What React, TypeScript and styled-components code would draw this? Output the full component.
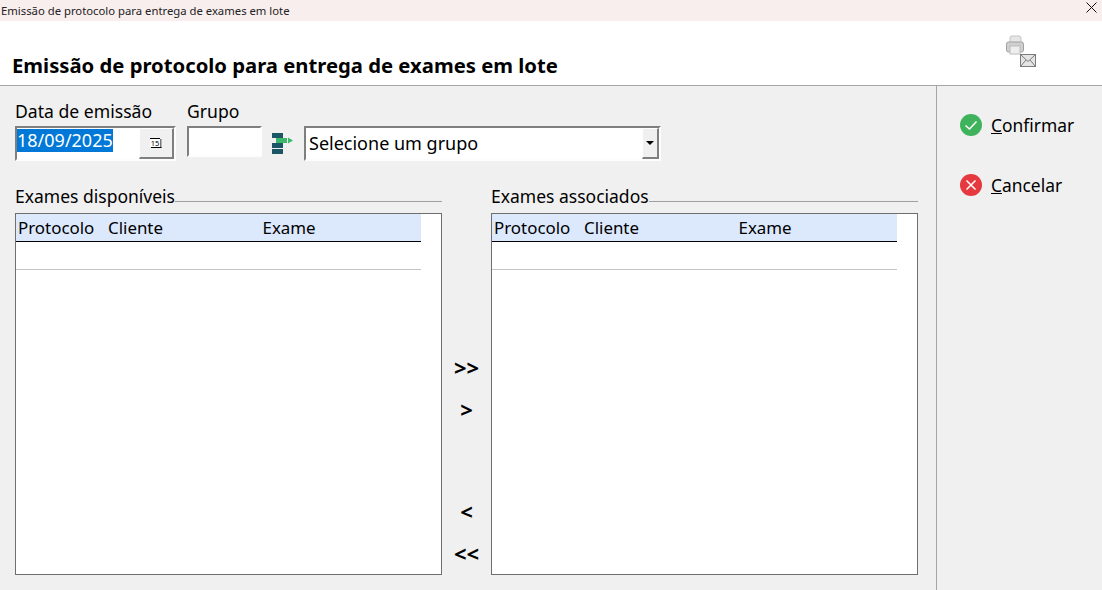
import React from 'react'
import styled, { createGlobalStyle } from 'styled-components'

const GlobalStyle = createGlobalStyle`
  html, body {
    margin: 0;
    padding: 0;
    background: #f0f0f0;
  }
  body {
    font-family: "Noto Sans", "Open Sans", sans-serif;
    color: #000;
    overflow: hidden;
  }
`

const columns = [
  { label: 'Protocolo', width: 90 },
  { label: 'Cliente', width: 154.5 },
  { label: 'Exame', width: 100 },
]

const ExamList = ({ title }: { title: string }) => (
  <Section>
    <SectionTitle>
      <span>{title}</span>
      <TitleRule />
    </SectionTitle>
    <ListBox>
      <ListHeader>
        {columns.map(col => (
          <HeaderCell key={col.label} $width={col.width}>
            {col.label}
          </HeaderCell>
        ))}
      </ListHeader>
      <ListRow />
    </ListBox>
  </Section>
)

const GroupIcon = () => (
  <svg width="24" height="22" viewBox="0 0 24 22">
    <rect x="1" y="0" width="11" height="5" fill="#1c5566" />
    <rect x="1" y="10" width="11" height="5" fill="#1c5566" />
    <rect x="1" y="16" width="11" height="5" fill="#1c5566" />
    <rect x="5" y="5" width="11" height="5" fill="#3cb86c" />
    <path d="M17 4.5 L22 7.5 L17 10.5 Z" fill="#3cb86c" />
  </svg>
)

const PrintMailIcon = () => (
  <svg width="32" height="34" viewBox="0 0 32 34">
    <rect x="4" y="1" width="11" height="8" rx="2" fill="#e6e6e6" stroke="#c4c4c4" />
    <rect x="0.5" y="7" width="17" height="10" rx="2" fill="#cfcfcf" stroke="#a2a2a2" />
    <rect x="4" y="11" width="10" height="8" fill="#eeeeee" stroke="#bcbcbc" />
    <rect x="14.5" y="19.5" width="15" height="12" fill="#e4e4e4" stroke="#7c7c7c" />
    <path d="M14.5 19.5 L22 26.5 L29.5 19.5 M14.5 31.5 L20 25 M29.5 31.5 L24 25" fill="none" stroke="#7c7c7c" />
  </svg>
)

const CalendarIcon = () => (
  <svg width="12" height="10" viewBox="0 0 12 10">
    <rect x="0" y="0" width="10" height="9" fill="#fff" />
    <path d="M0 0.5 H10" stroke="#000" />
    <rect x="10" y="1" width="1.5" height="9" fill="#777" />
    <rect x="1" y="9" width="10.5" height="1" fill="#000" />
    <text x="5" y="8" fontSize="7.5" textAnchor="middle" fill="#000">
      15
    </text>
  </svg>
)

const StatusIcon = ({ ok }: { ok?: boolean }) => (
  <svg width="22" height="22" viewBox="0 0 22 22">
    <circle cx="11" cy="11" r="11" fill={ok ? '#3fb35c' : '#e5393f'} />
    {ok ? (
      <path d="M5.5 11.5 L9.5 15 L16.5 7.5" fill="none" stroke="#fff" strokeWidth="1.5" />
    ) : (
      <path d="M6.5 6.5 L15.5 15.5 M15.5 6.5 L6.5 15.5" fill="none" stroke="#fff" strokeWidth="1.5" />
    )}
  </svg>
)

const App = () => {
  return (
    <Window>
      <GlobalStyle />
      <TitleBar>
        <TitleText>Emissão de protocolo para entrega de exames em lote</TitleText>
        <CloseButton>
          <svg width="11" height="11" viewBox="0 0 11 11">
            <path d="M0.5 0.5 L10.5 10.5 M10.5 0.5 L0.5 10.5" stroke="#111" strokeWidth="1" />
          </svg>
        </CloseButton>
      </TitleBar>
      <Header>
        <Heading>Emissão de protocolo para entrega de exames em lote</Heading>
        <HeaderIcon>
          <PrintMailIcon />
        </HeaderIcon>
      </Header>
      <Body>
        <Main>
          <FilterRow>
            <Field $gap={11}>
              <FieldLabel>Data de emissão</FieldLabel>
              <DateBox>
                <DateValue>18/09/2025</DateValue>
                <CalendarButton>
                  <CalendarIcon />
                </CalendarButton>
              </DateBox>
            </Field>
            <Field $gap={9}>
              <FieldLabel>Grupo</FieldLabel>
              <GroupInput />
            </Field>
            <IconSlot>
              <GroupIcon />
            </IconSlot>
            <SelectBox>
              <SelectText>Selecione um grupo</SelectText>
              <SelectArrow>
                <svg width="8" height="4" viewBox="0 0 8 4">
                  <path d="M0 0 H8 L4 4 Z" fill="#000" />
                </svg>
              </SelectArrow>
            </SelectBox>
          </FilterRow>
          <Lists>
            <ExamList title="Exames disponíveis" />
            <Transfer>
              <MoveGroup>
                <MoveButton>&gt;&gt;</MoveButton>
                <MoveButton>&gt;</MoveButton>
              </MoveGroup>
              <MoveGroup>
                <MoveButton>&lt;</MoveButton>
                <MoveButton>&lt;&lt;</MoveButton>
              </MoveGroup>
            </Transfer>
            <ExamList title="Exames associados" />
          </Lists>
        </Main>
        <Side>
          <ActionButton>
            <StatusIcon ok />
            <ActionLabel>
              <u>C</u>onfirmar
            </ActionLabel>
          </ActionButton>
          <ActionButton>
            <StatusIcon />
            <ActionLabel>
              <u>C</u>ancelar
            </ActionLabel>
          </ActionButton>
        </Side>
      </Body>
    </Window>
  )
}

const Window = styled.div`
  width: 1102px;
  height: 590px;
  display: flex;
  flex-direction: column;
  background: #f0f0f0;
`

const TitleBar = styled.div`
  height: 21px;
  flex: none;
  display: flex;
  align-items: center;
  justify-content: space-between;
  background: #f9eeee;
`

const TitleText = styled.span`
  padding-left: 1px;
  font-size: 11.3px;
  color: #222;
  white-space: nowrap;
`

const CloseButton = styled.div`
  display: flex;
  padding: 0 5px 7px 0;
`

const Header = styled.div`
  height: 65px;
  flex: none;
  box-sizing: border-box;
  display: flex;
  justify-content: space-between;
  background: #fff;
  border-bottom: 1px solid #a6a6a6;
`

const Heading = styled.h1`
  margin: 0;
  padding: 31px 0 0 12px;
  font-size: 20.25px;
  line-height: 27px;
  font-weight: 700;
  white-space: nowrap;
`

const HeaderIcon = styled.div`
  padding: 14px 64px 0 0;
`

const Body = styled.div`
  flex: 1;
  display: flex;
  min-height: 0;
`

const Main = styled.div`
  width: 936px;
  flex: none;
  box-sizing: border-box;
  padding: 14px 18px 15px 15px;
  display: flex;
  flex-direction: column;
`

const FilterRow = styled.div`
  display: flex;
  align-items: flex-start;
  height: 62px;
  flex: none;
`

const Field = styled.div<{ $gap: number }>`
  display: flex;
  flex-direction: column;
  margin-right: ${props => props.$gap}px;
`

const FieldLabel = styled.label`
  font-size: 17.6px;
  line-height: 22px;
  height: 26px;
  white-space: nowrap;
`

const sunken = `
  box-sizing: border-box;
  border-style: solid;
  border-width: 2px;
  border-color: #7f7f7f #fdfdfd #fdfdfd #7f7f7f;
`

const DateBox = styled.div`
  ${sunken}
  width: 161px;
  height: 35px;
  display: flex;
  background: #fff;
`

const DateValue = styled.span`
  align-self: flex-start;
  margin: 1px auto 0 0;
  background: #0078d7;
  color: #fff;
  font-size: 18px;
  line-height: 23px;
  height: 23px;
  width: 96px;
  white-space: nowrap;
`

const CalendarButton = styled.div`
  width: 35px;
  box-sizing: border-box;
  display: flex;
  align-items: center;
  justify-content: center;
  background: #f0f0f0;
  border-style: solid;
  border-width: 1px 2px 2px 1px;
  border-color: #fff #7f7f7f #7f7f7f #fff;
`

const GroupInput = styled.div`
  ${sunken}
  width: 75px;
  height: 31px;
  background: #fff;
`

const IconSlot = styled.div`
  padding: 33px 9px 0 0;
  height: 22px;
`

const SelectBox = styled.div`
  ${sunken}
  margin-top: 26px;
  width: 357px;
  height: 35px;
  display: flex;
  background: #fff;
`

const SelectText = styled.span`
  flex: 1;
  padding-left: 3px;
  font-size: 18px;
  line-height: 31px;
  white-space: nowrap;
`

const SelectArrow = styled.div`
  width: 17px;
  box-sizing: border-box;
  display: flex;
  align-items: center;
  justify-content: center;
  background: #f0f0f0;
  border-style: solid;
  border-width: 1px 2px 2px 1px;
  border-color: #fff #7f7f7f #7f7f7f #fff;
`

const Lists = styled.div`
  flex: 1;
  min-height: 0;
  display: grid;
  grid-template-columns: 427px 49px 427px;
  padding-top: 24px;
`

const Section = styled.section`
  display: flex;
  flex-direction: column;
  min-height: 0;
`

const SectionTitle = styled.div`
  display: flex;
  height: 27px;
  flex: none;
  font-size: 17.5px;
  line-height: 20px;
  white-space: nowrap;
`

const TitleRule = styled.div`
  flex: 1;
  height: 1px;
  margin-top: 15px;
  background: #a0a0a0;
`

const ListBox = styled.div`
  flex: 1;
  box-sizing: border-box;
  padding-right: 20px;
  background: #fff;
  border: 1px solid #6e6e6e;
`

const ListHeader = styled.div`
  height: 28px;
  box-sizing: border-box;
  display: flex;
  align-items: center;
  background: #dce9fd;
  border-bottom: 1px solid #000;
  padding-left: 2px;
`

const HeaderCell = styled.div<{ $width: number }>`
  width: ${props => props.$width}px;
  flex: none;
  font-size: 16.9px;
  white-space: nowrap;
`

const ListRow = styled.div`
  height: 28px;
  box-sizing: border-box;
  border-bottom: 1px solid #c4c4c4;
`

const Transfer = styled.div`
  display: flex;
  flex-direction: column;
  justify-content: space-between;
  padding: 169px 0 10px;
`

const MoveGroup = styled.div`
  display: flex;
  flex-direction: column;
  gap: 18px;
`

const MoveButton = styled.div`
  height: 24px;
  display: flex;
  align-items: center;
  justify-content: center;
  font-size: 22px;
  font-weight: 700;
`

const Side = styled.aside`
  flex: 1;
  box-sizing: border-box;
  border-left: 1px solid #a6a6a6;
  padding: 28px 0 0 23px;
  display: flex;
  flex-direction: column;
  gap: 38px;
`

const ActionButton = styled.div`
  display: flex;
  align-items: center;
  gap: 9px;
  height: 22px;
`

const ActionLabel = styled.span`
  font-size: 17.4px;
  white-space: nowrap;
`

export default App
